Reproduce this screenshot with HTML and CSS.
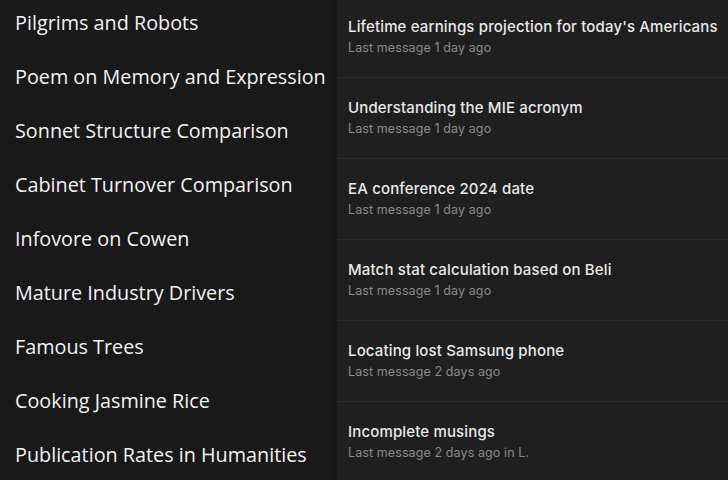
FILE: index.html
```html
<!DOCTYPE html>
<html>
<head>
<meta charset="utf-8">
<link rel="stylesheet" href="styles.css">
</head>
<body>
<div class="app">
  <nav class="sidebar">
    <div class="side-item">Pilgrims and Robots</div>
    <div class="side-item">Poem on Memory and Expression</div>
    <div class="side-item">Sonnet Structure Comparison</div>
    <div class="side-item">Cabinet Turnover Comparison</div>
    <div class="side-item">Infovore on Cowen</div>
    <div class="side-item">Mature Industry Drivers</div>
    <div class="side-item">Famous Trees</div>
    <div class="side-item">Cooking Jasmine Rice</div>
    <div class="side-item">Publication Rates in Humanities</div>
  </nav>
  <main class="list">
    <div class="chat first">
      <div class="title">Lifetime earnings projection for today's Americans</div>
      <div class="meta">Last message 1 day ago</div>
    </div>
    <div class="chat">
      <div class="title">Understanding the MIE acronym</div>
      <div class="meta">Last message 1 day ago</div>
    </div>
    <div class="chat">
      <div class="title">EA conference 2024 date</div>
      <div class="meta">Last message 1 day ago</div>
    </div>
    <div class="chat">
      <div class="title">Match stat calculation based on Beli</div>
      <div class="meta">Last message 1 day ago</div>
    </div>
    <div class="chat">
      <div class="title">Locating lost Samsung phone</div>
      <div class="meta">Last message 2 days ago</div>
    </div>
    <div class="chat">
      <div class="title">Incomplete musings</div>
      <div class="meta">Last message 2 days ago in L.</div>
    </div>
  </main>
</div>
</body>
</html>
```
FILE: styles.css
```css
html, body {
  margin: 0;
  padding: 0;
  background: #1f1f1f;
  overflow: hidden;
}
.app {
  display: flex;
  width: 728px;
  height: 480px;
  overflow: hidden;
}
.sidebar {
  width: 334px;
  flex: none;
  background: #191919;
  border-right: 3px solid #171717;
  padding-top: 9px;
  box-sizing: content-box;
}
.side-item {
  height: 54px;
  padding-left: 15px;
  font-family: "Open Sans", sans-serif;
  font-size: 19.8px;
  line-height: 28px;
  color: #f2f2f2;
  white-space: nowrap;
}
.list {
  flex: 1;
  background: #1f1f1f;
  margin-top: -3px;
}
.chat {
  border-bottom: 1px solid #2c2c2c;
  padding: 20px 0 0 11px;
  box-sizing: border-box;
  height: 81px;
  font-family: "Inter", sans-serif;
  white-space: nowrap;
}
.title {
  font-size: 15px;
  font-weight: 500;
  line-height: 20px;
  color: #e8e8e8;
  letter-spacing: 0.15px;
}
.meta {
  margin-top: 3px;
  font-size: 12.5px;
  line-height: 16px;
  color: #8a8a8a;
  letter-spacing: 0.1px;
}
```
